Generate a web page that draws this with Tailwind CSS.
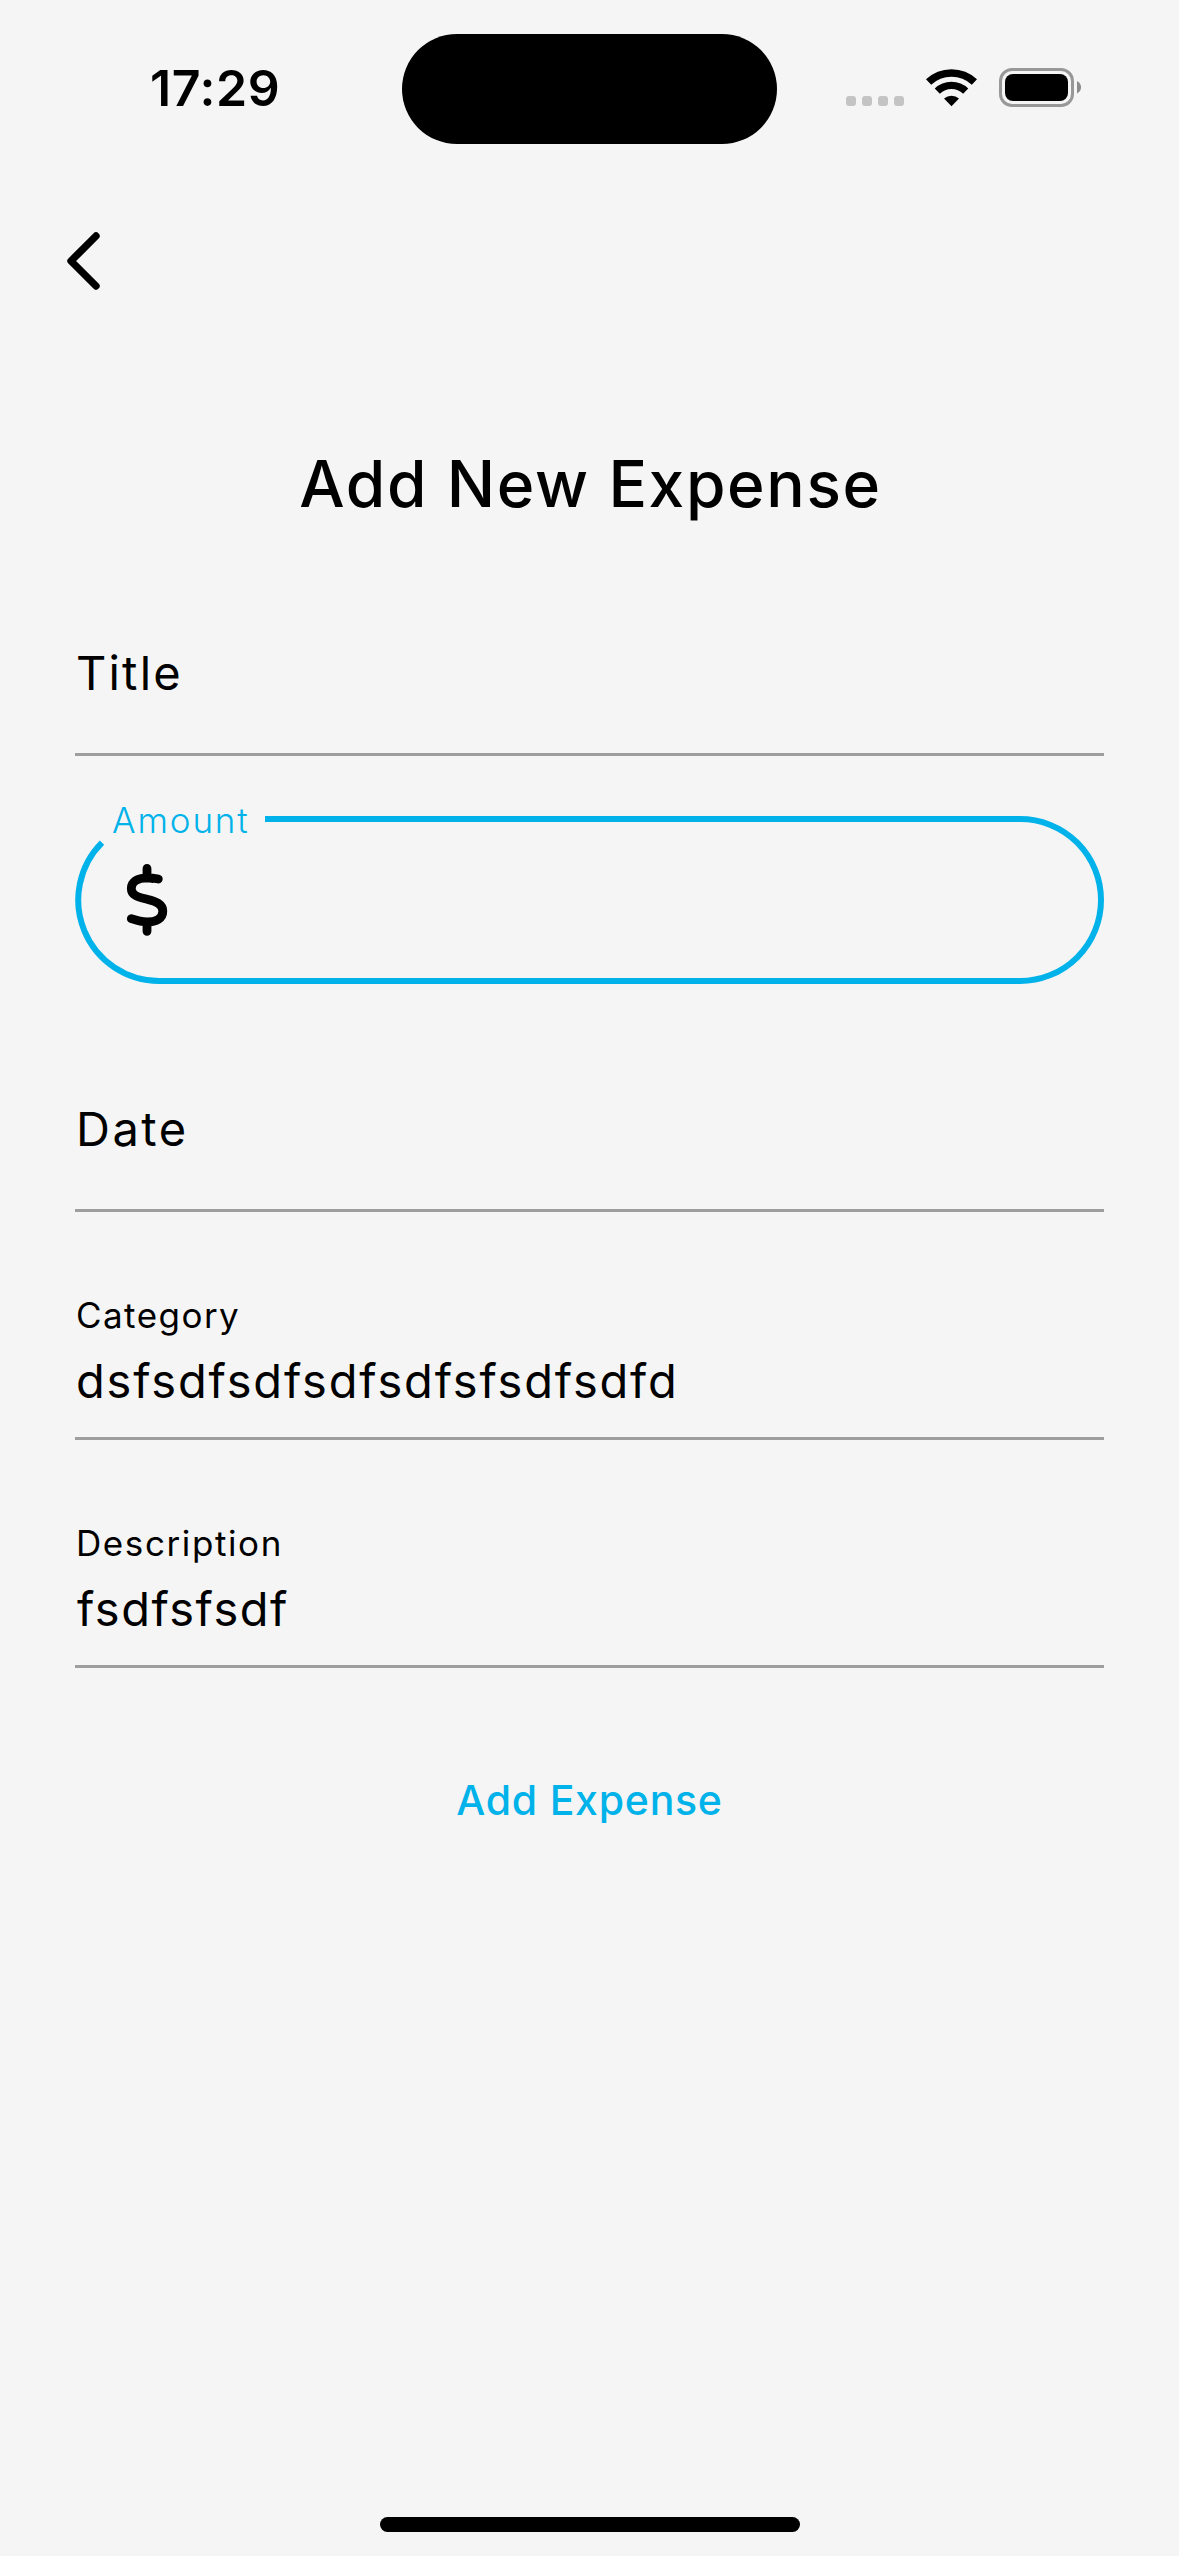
<!DOCTYPE html>
<html lang="en">
<head>
<meta charset="utf-8">
<title>Add New Expense</title>
<script src="https://cdn.jsdelivr.net/npm/@tailwindcss/browser@4"></script>
</head>
<body class="bg-[#f5f5f5]">
<div class="flex h-[2556px] w-[1179px] flex-col overflow-hidden bg-[#f5f5f5] font-['Inter',sans-serif] text-black">
  <!-- Status bar -->
  <header class="flex h-[177px] shrink-0 items-start">
    <div class="w-[402px] pt-[58px] pl-[150px] text-[50px] leading-[60px] font-semibold tracking-[0.6px]">17:29</div>
    <div class="mt-[34px] h-[110px] w-[375px] rounded-full bg-black"></div>
    <div class="flex h-[177px] flex-1 items-start pl-[69px]">
      <div class="mt-[96px] flex gap-[6px]">
        <span class="size-[10px] rounded-[3px] bg-[#c4c4c4]"></span>
        <span class="size-[10px] rounded-[3px] bg-[#c4c4c4]"></span>
        <span class="size-[10px] rounded-[3px] bg-[#c4c4c4]"></span>
        <span class="size-[10px] rounded-[3px] bg-[#c4c4c4]"></span>
      </div>
      <svg class="mt-[68px] ml-[22px]" width="51" height="39" viewBox="926 68 51 39" fill="none">
        <path d="M928.6 82A33.5 33.5 0 0 1 974.4 82" stroke="#000" stroke-width="7.6"/>
        <path d="M937.3 91.1A20.5 20.5 0 0 1 965.7 91.1" stroke="#000" stroke-width="7.4"/>
        <path d="M944 98.6A11.3 11.3 0 0 1 959 98.6L951.5 106.3Z" fill="#000"/>
      </svg>
      <div class="mt-[68px] ml-[22px] h-[39px] w-[75px] rounded-[13px] border-[3px] border-[#989898] p-[3px]">
        <div class="h-full w-full rounded-[8px] bg-black"></div>
      </div>
      <svg class="mt-[81px] ml-[3px]" width="4" height="13" viewBox="0 0 4 13"><path d="M0 0Q4 2.2 4 6.3T0 12.6Z" fill="#8c8c8c"/></svg>
    </div>
  </header>
  <!-- Navigation -->
  <nav class="flex h-[268px] shrink-0 items-start pt-[54px] pl-[64px]">
    <svg width="40" height="60" viewBox="64 231 40 60" fill="none" stroke="#000" stroke-width="7.4" stroke-linecap="round" stroke-linejoin="round"><path d="M96 236L71 261L96 286"/></svg>
  </nav>
  <main class="flex flex-1 flex-col px-[75px]">
    <h1 class="pl-[2px] text-center text-[64px] leading-[77px] font-medium tracking-[1.63px] whitespace-nowrap">Add New Expense</h1>
    <div class="mt-[122px] border-b-[3px] border-[#9e9e9e] pb-[52px] pl-px text-[47px] leading-[57px] tracking-[2.2px]">Title</div>
    <div class="relative mt-[60px] h-[168px]">
      <svg width="1029" height="168" viewBox="0 0 1029 168" fill="none">
        <path d="M190 3H945A81 81 0 0 1 945 165H84A81 81 0 0 1 27 26.7" stroke="#00b2ea" stroke-width="6"/>
        <path d="M77.8 62.6C76 62 74 61.8 72 61.8C62.5 61.8 56.3 66 56.3 72.5C56.3 79.5 63 81 72 83.3C81.5 85.6 87.8 88.2 87.8 95.3C87.8 102.5 81.5 106 72 106C66.5 106 61 104.3 56.3 102.7M72 52.4V62M72 106V115.3M83.3 63C79.5 62.2 75.5 61.8 72 61.8" stroke="#000" stroke-width="8.8" stroke-linecap="round" stroke-linejoin="round"/>
      </svg>
      <span class="absolute -top-[17px] left-[37px] text-[35px] leading-[42px] font-light tracking-[1.85px] text-[#00b2ea]">Amount</span>
    </div>
    <div class="mt-[116px] border-b-[3px] border-[#9e9e9e] pb-[52px] pl-px text-[47px] leading-[57px] tracking-[2.5px]">Date</div>
    <div class="mt-[82px] border-b-[3px] border-[#9e9e9e] pb-[28px] pl-px">
      <div class="text-[35px] leading-[42px] tracking-[1.45px]">Category</div>
      <div class="mt-4 text-[47px] leading-[57px] tracking-[1.81px]">dsfsdfsdfsdfsdfsfsdfsdfd</div>
    </div>
    <div class="mt-[82px] border-b-[3px] border-[#9e9e9e] pb-[28px] pl-px">
      <div class="text-[35px] leading-[42px] tracking-[1.6px]">Description</div>
      <div class="mt-4 pl-px text-[47px] leading-[57px] tracking-[1.5px]">fsdfsfsdf</div>
    </div>
    <button class="mt-[107px] self-center text-[41px] leading-[50px] font-medium tracking-[0.75px] text-[#00b2ea]">Add Expense</button>
  </main>
  <!-- Home indicator -->
  <div class="mb-[24px] h-[15px] w-[420px] shrink-0 self-center rounded-full bg-black"></div>
</div>
</body>
</html>
